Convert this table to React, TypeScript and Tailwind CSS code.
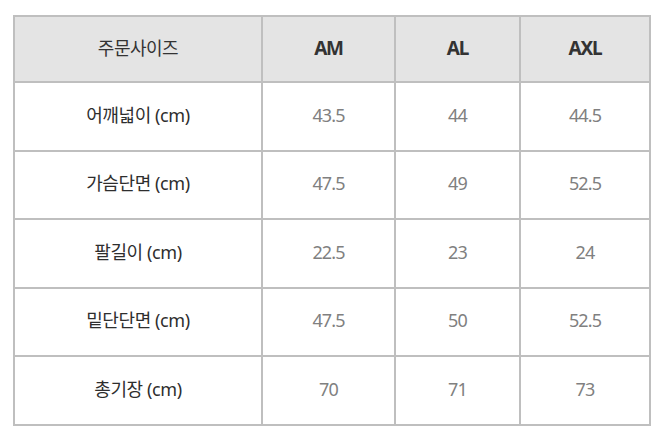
import React from 'react';

const rows = [
  { label: '어깨넓이 (cm)', values: ['43.5', '44', '44.5'] },
  { label: '가슴단면 (cm)', values: ['47.5', '49', '52.5'] },
  { label: '팔길이 (cm)', values: ['22.5', '23', '24'] },
  { label: '밑단단면 (cm)', values: ['47.5', '50', '52.5'] },
  { label: '총기장 (cm)', values: ['70', '71', '73'] },
];

const sizes = ['AM', 'AL', 'AXL'];

export default function App() {
  return (
    <div
      className="w-[658px] h-[439px] bg-white pl-[13px] pt-[15px]"
      style={{ fontFamily: '"Noto Sans", "Noto Sans CJK KR", sans-serif' }}
    >
      <table className="border-collapse table-fixed w-[636px]">
        <colgroup>
          <col className="w-[248px]" />
          <col className="w-[133px]" />
          <col className="w-[125px]" />
          <col className="w-[130px]" />
        </colgroup>
        <thead>
          <tr className="h-[66px] bg-[#e4e4e4]">
            <th className="border-2 border-[#bfbfbf] text-center font-normal text-[18px] text-[#333] tracking-[-0.5px] pb-[2px]">
              주문사이즈
            </th>
            {sizes.map((s) => (
              <th
                key={s}
                className="border-2 border-[#bfbfbf] text-center font-bold text-[19px] text-[#333] tracking-[-1.2px] pb-[2px]"
              >
                {s}
              </th>
            ))}
          </tr>
        </thead>
        <tbody>
          {rows.map((r) => (
            <tr key={r.label} className="bg-white h-[68.5px]">
              <td className="border-2 border-[#bfbfbf] text-center text-[18px] text-[#2e2e2e] tracking-[-0.4px] pb-[2px]">
                {r.label}
              </td>
              {r.values.map((v, i) => (
                <td
                  key={i}
                  className="border-2 border-[#bfbfbf] text-center text-[18px] text-[#808080] tracking-[-0.9px] pb-[2px]"
                >
                  {v}
                </td>
              ))}
            </tr>
          ))}
        </tbody>
      </table>
    </div>
  );
}
